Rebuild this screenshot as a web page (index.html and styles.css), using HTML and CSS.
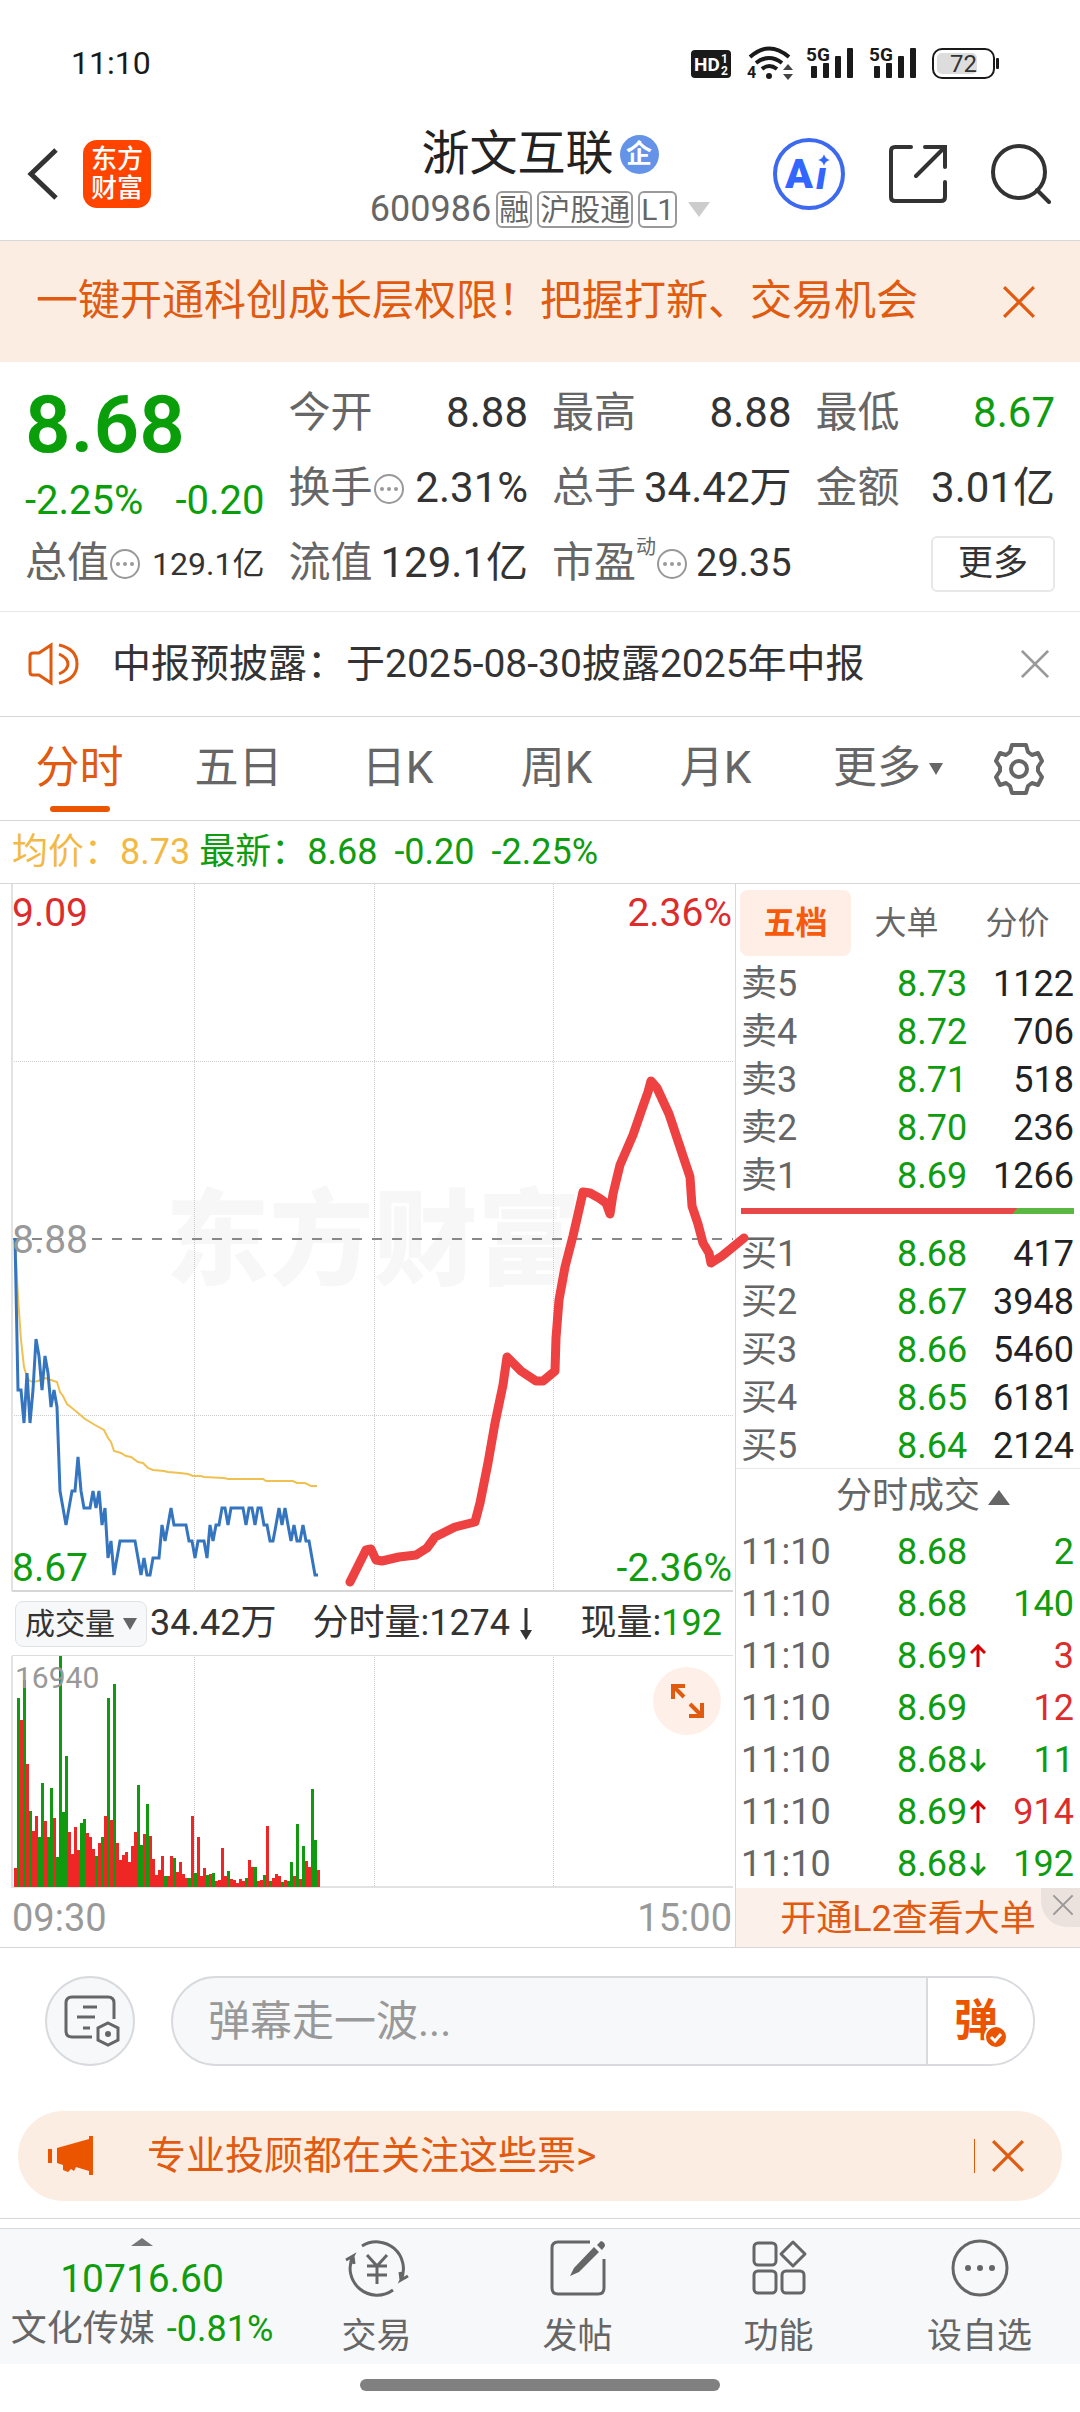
FILE: index.html
```
<!DOCTYPE html>
<html lang="zh-CN">
<head>
  <meta charset="UTF-8" />
  <meta name="viewport" content="width=device-width, initial-scale=1.0"/>
  <title>浙文互联 600986</title>
  <link rel="stylesheet" href="styles.css">
</head>
<body>
  <svg class="defs" aria-hidden="true">
    <symbol id="close" viewBox="0 0 32 32"><path d="M2 2 30 30M30 2 2 30" /></symbol>
    <symbol id="info" viewBox="0 0 32 32">
      <circle cx="16" cy="16" r="14" fill="none" stroke="#999" stroke-width="2" />
      <g fill="#999"><circle cx="9" cy="16" r="2" /><circle cx="16" cy="16" r="2" /><circle cx="23" cy="16" r="2" /></g>
    </symbol>
    <symbol id="up" viewBox="0 0 16 24"><path d="M8 23V2M1 9 8 2 15 9" fill="none" stroke="#d80000" stroke-width="3" /></symbol>
    <symbol id="down" viewBox="0 0 16 24"><path d="M8 1V22M1 15 8 22 15 15" fill="none" stroke="#0f9c0f" stroke-width="3" /></symbol>
  </svg>

  <div class="status">
    <span class="clock">11:10</span>
    <svg class="status-icons" viewBox="0 0 310 44" width="310" height="44">
      <rect x="1" y="9" width="40" height="28" rx="4" fill="#1a1a1a" />
      <text x="4" y="30" font-size="19" font-weight="700" fill="#fff">HD</text>
      <text x="31" y="22" font-size="12" font-weight="700" fill="#fff">1</text>
      <text x="31" y="34" font-size="12" font-weight="700" fill="#fff">2</text>
      <g fill="none" stroke="#1a1a1a" stroke-width="4">
        <path d="M60 16Q79 -1 99 16" />
        <path d="M66 22Q79 12 92 22" />
        <path d="M72 28Q79 22 87 28" />
      </g>
      <g fill="#1a1a1a">
        <circle cx="79" cy="35" r="3" />
        <text x="57" y="37" font-size="16" font-weight="700">4</text>
        <path d="M93 29 98 23 103 29ZM93 33 98 39 103 33Z" fill="#444" />
        <g id="signal">
          <text x="116" y="20" font-size="19" font-weight="700">5G</text>
          <rect x="121" y="25" width="6" height="12" rx="1" />
          <rect x="133" y="22" width="6" height="15" rx="1" />
          <rect x="145" y="15" width="6" height="22" rx="1" />
          <rect x="157" y="7" width="6" height="30" rx="1" />
        </g>
        <use href="#signal" x="63" />
        <rect x="306" y="17" width="3" height="11" rx="1" />
      </g>
      <rect x="243" y="8" width="61" height="29" rx="9" fill="#fff" stroke="#1a1a1a" stroke-width="2" />
      <rect x="247" y="12" width="40" height="21" rx="5" fill="#ddd" />
      <text x="260" y="31" font-size="24" fill="#333">72</text>
    </svg>
  </div>

  <header class="header">
    <div class="header-left">
      <a href="#" class="back" aria-label="返回">
        <svg viewBox="0 0 32 54" width="32" height="54"><path d="M29 3 4 27 29 51" fill="none" stroke="#333" stroke-width="5" /></svg>
      </a>
      <a href="#" class="logo">东方<br>财富</a>
    </div>
    <div class="stock">
      <h1>浙文互联<span class="badge">企</span></h1>
      <div class="stock-sub">
        <span class="code">600986</span>
        <span class="tag">融</span>
        <span class="tag">沪股通</span>
        <span class="tag">L1</span>
        <svg class="stock-caret" viewBox="0 0 22 15" width="22" height="15"><path d="M0 0H22L11 15Z" fill="#ccc" /></svg>
      </div>
    </div>
    <div class="header-right">
      <button aria-label="AI">
        <svg viewBox="0 0 72 72" width="72" height="72">
          <circle cx="36" cy="36" r="34" fill="#fff" stroke="#3d69ee" stroke-width="4" />
          <g fill="#3366ff">
            <text x="12" y="50" font-size="41" font-weight="900">A</text>
            <text x="43" y="51" font-size="38" font-weight="900" font-style="italic">ı</text>
            <path d="M51 16Q52 21 57 22Q52 23 51 28Q50 23 45 22Q50 21 51 16Z" />
          </g>
        </svg>
      </button>
      <button aria-label="分享">
        <svg viewBox="0 0 58 58" width="58" height="58">
          <path d="M22 2H6Q2 2 2 6V52Q2 56 6 56H52Q56 56 56 52V37M36 2H56V22M56 2 27 31" fill="none" stroke="#333" stroke-width="4" stroke-linecap="round" />
        </svg>
      </button>
      <button aria-label="搜索">
        <svg viewBox="0 0 60 60" width="60" height="60">
          <path d="M46 46 58 58" stroke="#333" stroke-width="4" stroke-linecap="round" />
          <circle cx="28" cy="28" r="26" fill="none" stroke="#333" stroke-width="4" />
        </svg>
      </button>
    </div>
  </header>

  <div class="banner">
    <a href="#">一键开通科创成长层权限！把握打新、交易机会</a>
    <button aria-label="关闭"><svg class="x x-orange" width="34" height="34"><use href="#close" /></svg></button>
  </div>

  <section class="quote">
    <div class="price-block">
      <div class="price">8.68</div>
      <div class="change"><span>-2.25%</span><span>-0.20</span></div>
    </div>
    <div class="cell"><span class="label">今开</span><span>8.88</span></div>
    <div class="cell"><span class="label">最高</span><span>8.88</span></div>
    <div class="cell"><span class="label">最低</span><span class="green">8.67</span></div>
    <div class="cell"><span class="label">换手<svg class="info"><use href="#info" /></svg></span><span>2.31%</span></div>
    <div class="cell"><span class="label">总手</span><span>34.42万</span></div>
    <div class="cell"><span class="label">金额</span><span>3.01亿</span></div>
    <div class="cell"><span class="label">总值<svg class="info"><use href="#info" /></svg></span><span class="small">129.1亿</span></div>
    <div class="cell"><span class="label">流值</span><span>129.1亿</span></div>
    <div class="cell"><span class="label">市盈<sup>动</sup><svg class="info"><use href="#info" /></svg></span><span class="medium">29.35</span></div>
    <div class="cell cell-more"><button class="more">更多</button></div>
  </section>

  <div class="notice">
    <svg viewBox="0 0 52 44" width="52" height="44" fill="none" stroke="#e05a10" stroke-width="3">
      <path d="M23 3 11 11H5Q2 11 2 14V30Q2 33 5 33H11L23 41ZM31 12Q40 16 40 22Q40 28 31 32M31 3Q49 7 49 22Q49 37 31 41" />
    </svg>
    <a href="#">中报预披露：于2025-08-30披露2025年中报</a>
    <button aria-label="关闭"><svg class="x x-gray" width="30" height="30"><use href="#close" /></svg></button>
  </div>

  <nav class="periods">
    <button class="active">分时</button>
    <button>五日</button>
    <button>日K</button>
    <button>周K</button>
    <button>月K</button>
    <button class="periods-more">更多<svg viewBox="0 0 14 12" width="14" height="12"><path d="M0 0H14L7 12Z" fill="#666" /></svg></button>
    <button class="settings" aria-label="设置">
      <svg viewBox="0 0 50 52" width="50" height="52" fill="none" stroke="#666" stroke-width="4" stroke-linejoin="round">
        <path d="M18 2H32L34 9 38 12 44 10 48 18 44 24V28L48 34 44 42 38 40 34 43 32 50H18L16 43 12 40 6 42 2 34 6 28V24L2 18 6 10 12 12 16 9Z" />
        <circle cx="25" cy="26" r="8" />
      </svg>
    </button>
  </nav>

  <div class="legend">
    <span class="avg">均价：8.73</span>
    <span class="green">最新：8.68</span>
    <span class="green">-0.20</span>
    <span class="green">-2.25%</span>
  </div>

  <main class="main">
    <div class="charts">
      <div class="plot">
        <span class="watermark">东方财富</span>
        <svg id="priceChart" class="price-chart" viewBox="0 1 735 708" preserveAspectRatio="none">
          <g stroke="#ccc" stroke-dasharray="1 1">
            <path d="M12 178.5H733M12 532.5H733M194.5 1V708M374.5 1V708M553.5 1V708" />
          </g>
          <path d="M12 356H733" stroke="#888" stroke-width="2" stroke-dasharray="10 10" />
          <path d="M12 1V708" stroke="#e2e2e2" stroke-width="2" />
          <path d="M12 708H733" stroke="#d6d6d6" stroke-width="2" />
        </svg>
        <span class="axis top-left red">9.09</span>
        <span class="axis top-right red">2.36%</span>
        <span class="axis mid-left">8.88</span>
        <span class="axis bottom-left green">8.67</span>
        <span class="axis bottom-right green">-2.36%</span>
      </div>

      <div class="volume-info">
        <label class="indicator">
          <select aria-label="指标"><option>成交量</option><option>MACD</option></select>
        </label>
        <span>34.42万</span>
        <span class="minute">分时量:1274<svg viewBox="0 0 12 32" width="12" height="32"><path d="M6 0V28" stroke="#333" stroke-width="3" /><path d="M0 22H12L6 32Z" fill="#333" /></svg></span>
        <span class="current">现量:<b class="green">192</b></span>
      </div>

      <div class="volume">
        <svg id="volumeChart" class="volume-chart" viewBox="0 0 735 234" preserveAspectRatio="none">
          <path d="M194.5 0V232M374.5 0V232M553.5 0V232" stroke="#ccc" stroke-dasharray="1 1" />
          <path d="M12 1V233M12 232H733" stroke="#e2e2e2" stroke-width="2" />
          <path d="M12 .5H733" stroke="#ddd" />
        </svg>
        <span class="volume-max">16940</span>
        <button class="expand" aria-label="全屏">
          <svg viewBox="0 0 36 36" width="36" height="36" fill="none" stroke="#e05a10" stroke-width="4">
            <path d="M16 3H4V16M4 3 15 14M33 20V33H20M33 33 21 21" />
          </svg>
        </button>
      </div>
      <div class="times"><span>09:30</span><span>15:00</span></div>
    </div>

    <aside class="side">
      <div class="side-tabs">
        <button class="active">五档</button>
        <button>大单</button>
        <button>分价</button>
      </div>
      <table class="depth">
        <tr><th>卖5</th><td>8.73</td><td>1122</td></tr>
        <tr><th>卖4</th><td>8.72</td><td>706</td></tr>
        <tr><th>卖3</th><td>8.71</td><td>518</td></tr>
        <tr><th>卖2</th><td>8.70</td><td>236</td></tr>
        <tr><th>卖1</th><td>8.69</td><td>1266</td></tr>
      </table>
      <div class="ratio"><span class="ratio-buy"></span></div>
      <table class="depth">
        <tr><th>买1</th><td>8.68</td><td>417</td></tr>
        <tr><th>买2</th><td>8.67</td><td>3948</td></tr>
        <tr><th>买3</th><td>8.66</td><td>5460</td></tr>
        <tr><th>买4</th><td>8.65</td><td>6181</td></tr>
        <tr><th>买5</th><td>8.64</td><td>2124</td></tr>
      </table>
      <button class="trades-title">分时成交<svg viewBox="0 0 22 16" width="22" height="16"><path d="M0 16H22L11 1Z" fill="#666" /></svg></button>
      <table class="depth trades">
        <tr><th>11:10</th><td>8.68</td><td class="green">2</td></tr>
        <tr><th>11:10</th><td>8.68</td><td class="green">140</td></tr>
        <tr><th>11:10</th><td>8.69<svg class="arrow"><use href="#up" /></svg></td><td class="red">3</td></tr>
        <tr><th>11:10</th><td>8.69</td><td class="red">12</td></tr>
        <tr><th>11:10</th><td>8.68<svg class="arrow"><use href="#down" /></svg></td><td class="green">11</td></tr>
        <tr><th>11:10</th><td>8.69<svg class="arrow"><use href="#up" /></svg></td><td class="red">914</td></tr>
        <tr><th>11:10</th><td>8.68<svg class="arrow"><use href="#down" /></svg></td><td class="green">192</td></tr>
      </table>
      <div class="level2">
        <a href="#">开通L2查看大单</a>
        <button aria-label="关闭"><svg class="x x-gray" width="22" height="22"><use href="#close" /></svg></button>
      </div>
    </aside>
  </main>

  <form class="comment">
    <button type="button" class="comment-list" aria-label="弹幕设置">
      <svg viewBox="0 0 56 52" width="56" height="52" fill="none" stroke="#666" stroke-width="3">
        <path d="M50 24V8Q50 2 44 2H8Q2 2 2 8V36Q2 42 8 42H28M19 12H33M13 22H31M19 33H26" />
        <path d="M44 28 54 33V45L44 50 34 45V33Z" />
        <circle cx="44" cy="39" r="3" fill="#666" stroke="none" />
      </svg>
    </button>
    <div class="comment-box">
      <input type="text" placeholder="弹幕走一波..." aria-label="弹幕">
      <button type="button" class="danmu">弹<svg viewBox="0 0 24 24" width="24" height="24"><circle cx="12" cy="12" r="11" fill="#eb5500" stroke="#fff" stroke-width="2" /><path d="M7 12 11 16 17 9" fill="none" stroke="#fff" stroke-width="3" /></svg></button>
    </div>
  </form>

  <div class="promo">
    <svg viewBox="0 0 46 40" width="46" height="40" fill="#eb5500">
      <path d="M0 13H4V27H0ZM9 12 41 3V0H45V39H41V35L28 31 26 35 23 33 20 36 15 34V29L9 27Z" />
    </svg>
    <a href="#">专业投顾都在关注这些票&gt;</a>
    <button aria-label="关闭"><svg class="x x-orange" width="34" height="34"><use href="#close" /></svg></button>
  </div>

  <footer class="footer">
    <a href="#" class="index">
      <svg viewBox="0 0 22 8" width="22" height="8"><path d="M0 8H22L11 0Z" fill="#777" /></svg>
      <span class="index-value">10716.60</span>
      <span class="index-name">文化传媒<span class="green">-0.81%</span></span>
    </a>
    <a href="#" class="item">
      <svg viewBox="0 0 66 60" width="66" height="60" fill="none" stroke="#666" stroke-width="3">
        <path d="M18 8A27 27 0 0 1 57 42L64 38M57 42 56 34M49 52A27 27 0 0 1 9 18L2 22M9 18 10 26M23 17 33 28 43 17M33 28V46M23 28H43M23 37H43" />
      </svg>
      交易
    </a>
    <a href="#" class="item">
      <svg viewBox="0 0 60 60" width="60" height="60" fill="none" stroke="#666" stroke-width="3">
        <path d="M42 4H10Q4 4 4 10V50Q4 56 10 56H50Q56 56 56 50V21" />
        <path d="M22 38 26 30 46 9 51 14 31 34ZM49 7 53 3Q57 4 57 8L54 12Z" fill="#666" stroke="none" />
      </svg>
      发帖
    </a>
    <a href="#" class="item">
      <svg viewBox="0 0 60 60" width="60" height="60" fill="none" stroke="#666" stroke-width="3">
        <rect x="5" y="5" width="22" height="22" rx="4" />
        <rect x="5" y="33" width="22" height="22" rx="4" />
        <rect x="33" y="33" width="22" height="22" rx="4" />
        <path d="M44 4 56 16 44 28 32 16Z" stroke-linejoin="round" />
      </svg>
      功能
    </a>
    <a href="#" class="item">
      <svg viewBox="0 0 60 60" width="60" height="60">
        <circle cx="30" cy="30" r="27" fill="none" stroke="#666" stroke-width="3" />
        <g fill="#666"><circle cx="18" cy="30" r="3" /><circle cx="30" cy="30" r="3" /><circle cx="42" cy="30" r="3" /></g>
      </svg>
      设自选
    </a>
  </footer>
  <div class="home"><span></span></div>

  <script src="script.js"></script>
</body>
</html>
```

FILE: styles.css
```
* {
  box-sizing: border-box;
}

body {
  margin: 0;
  background: #fff;
  color: #333;
  font-family: Roboto, "Noto Sans CJK SC", sans-serif;
  font-size: 36px;
  line-height: 1.25;
}

button, input, select {
  font: inherit;
  color: inherit;
  border: none;
  background: none;
  padding: 0;
  margin: 0;
}

button {
  cursor: pointer;
}

a {
  color: inherit;
  text-decoration: none;
}

svg {
  display: block;
  flex: none;
}

.defs {
  display: none;
}

.x {
  fill: none;
  stroke-width: 3;
}

.x-orange {
  stroke: #e05a10;
}

.x-gray {
  stroke: #999;
}

/* status bar */
.status {
  display: flex;
  justify-content: space-between;
  align-items: center;
  height: 125px;
  padding: 0 80px 0 71px;
}

.clock {
  font-size: 32px;
  color: #1a1a1a;
}

/* header */
.header {
  display: grid;
  grid-template-columns: 1fr auto 1fr;
  height: 116px;
  border-bottom: 1px solid #d8d8d8;
}

.header-left, .header-right {
  display: flex;
  align-items: center;
  height: 98px;
}

.header-left {
  gap: 24px;
  padding-left: 27px;
}

.header-right {
  justify-content: flex-end;
  gap: 44px;
  padding-right: 29px;
}

.logo {
  width: 68px;
  height: 68px;
  padding-top: 5px;
  border-radius: 14px;
  background: #ff4400;
  color: #fff;
  font-size: 26px;
  line-height: 29px;
  font-weight: 500;
  text-align: center;
}

.stock h1 {
  display: flex;
  justify-content: center;
  align-items: center;
  gap: 6px;
  margin: 0;
  font-size: 48px;
  line-height: 58px;
  font-weight: 400;
  color: #222;
}

.badge {
  width: 39px;
  height: 39px;
  border-radius: 50%;
  background: #6493e8;
  color: #fff;
  font-size: 26px;
  line-height: 38px;
  font-weight: 700;
  text-align: center;
}

.stock-sub {
  display: flex;
  align-items: center;
  gap: 5px;
  height: 52px;
  color: #666;
}

.tag {
  border: 2px solid #999;
  border-radius: 6px;
  padding: 0 1px;
  font-size: 30px;
  line-height: 33px;
}

.stock-caret {
  margin-left: 6px;
}

/* banner */
.banner {
  display: flex;
  justify-content: space-between;
  align-items: center;
  height: 121px;
  padding: 0 44px 0 36px;
  background: #fcede3;
  color: #e05a10;
  font-size: 42px;
}

/* quote */
.quote {
  display: grid;
  grid-template-columns: repeat(4, 1fr);
  grid-auto-rows: 75px;
  column-gap: 24px;
  padding: 14px 25px 10px;
  border-bottom: 1px solid #e8e8e8;
  font-size: 42px;
}

.price-block {
  grid-row: span 2;
  color: #0a9f0a;
}

.price {
  font-size: 80px;
  line-height: 98px;
  font-weight: 600;
}

.change {
  display: flex;
  justify-content: space-between;
  font-size: 40px;
  line-height: 54px;
}

.cell {
  display: flex;
  justify-content: space-between;
  align-items: center;
  white-space: nowrap;
}

.label {
  display: flex;
  align-items: center;
  color: #666;
}

.label sup {
  align-self: flex-start;
  font-size: 20px;
  line-height: 20px;
}

.info {
  width: 32px;
  height: 32px;
}

.small {
  font-size: 32px;
}

.medium {
  font-size: 38px;
}

.cell-more {
  justify-content: flex-end;
}

.more {
  width: 124px;
  height: 56px;
  border: 2px solid #e8e8e8;
  border-radius: 6px;
  font-size: 35px;
  line-height: 50px;
}

/* notice */
.notice {
  display: flex;
  align-items: center;
  height: 105px;
  padding: 0 30px 0 28px;
  border-bottom: 1px solid #d8d8d8;
  font-size: 39px;
}

.notice a {
  flex: 1;
  padding-left: 32px;
}

/* periods */
.periods {
  display: grid;
  grid-template-columns: repeat(5, 159fr) 186fr 99fr;
  height: 104px;
  border-bottom: 1px solid #d8d8d8;
  color: #666;
  font-size: 44px;
}

.periods button {
  display: flex;
  justify-content: center;
  align-items: center;
}

.periods .active {
  position: relative;
  color: #e05a10;
}

.periods .active::after {
  content: "";
  position: absolute;
  bottom: 8px;
  width: 60px;
  height: 6px;
  border-radius: 3px;
  background: #eb5500;
}

.periods-more {
  gap: 8px;
}

.periods .settings {
  padding-right: 24px;
}

/* legend */
.legend {
  display: flex;
  align-items: center;
  gap: 17px;
  height: 63px;
  padding-left: 12px;
  border-bottom: 1px solid #d8d8d8;
}

.legend .avg {
  margin-right: -8px;
  color: #f2b946;
}

/* charts */
.main {
  display: grid;
  grid-template-columns: 1fr 345px;
  border-bottom: 1px solid #d8d8d8;
}

.plot {
  position: relative;
}

.price-chart {
  position: relative;
  width: 100%;
  height: 708px;
  overflow: visible;
  fill: none;
}

.watermark {
  position: absolute;
  top: 50%;
  left: 12px;
  right: 0;
  margin-top: -56px;
  color: #f7f7f7;
  font-size: 104px;
  line-height: 120px;
  font-weight: 900;
  text-align: center;
}

.axis {
  position: absolute;
  font-size: 39px;
  line-height: 44px;
  color: #999;
}

.top-left {
  top: 7px;
  left: 12px;
}

.top-right {
  top: 7px;
  right: 3px;
}

.mid-left {
  top: 50%;
  left: 12px;
  margin-top: -20px;
}

.bottom-left {
  bottom: 2px;
  left: 12px;
}

.bottom-right {
  bottom: 2px;
  right: 3px;
}

.volume-info {
  display: flex;
  align-items: center;
  height: 63px;
  padding: 0 13px 0 15px;
  white-space: nowrap;
}

.indicator {
  position: relative;
  margin-right: 3px;
}

.indicator select {
  appearance: none;
  display: block;
  width: 132px;
  height: 46px;
  padding-left: 9px;
  border: 1px solid #e0e2e6;
  border-radius: 8px;
  background: #f7f8fa;
  font-size: 30px;
}

.indicator::after {
  content: "";
  position: absolute;
  top: 17px;
  right: 10px;
  border: 7px solid transparent;
  border-top: 12px solid #666;
  border-bottom: none;
}

.minute {
  display: flex;
  align-items: center;
  gap: 10px;
  margin-left: 36px;
}

.current {
  margin-left: auto;
}

.current b {
  font-weight: 400;
}

.volume {
  position: relative;
}

.volume-chart {
  width: 100%;
  height: 234px;
  fill: none;
}

.volume-max {
  position: absolute;
  top: 4px;
  left: 15px;
  color: #999;
  font-size: 30px;
}

.expand {
  position: absolute;
  top: 12px;
  right: 14px;
  display: flex;
  justify-content: center;
  align-items: center;
  width: 68px;
  height: 68px;
  border-radius: 50%;
  background: #fef0e8;
}

.times {
  display: flex;
  justify-content: space-between;
  align-items: center;
  height: 58px;
  padding: 2px 3px 0 12px;
  color: #999;
  font-size: 38px;
}

/* order book */
.side {
  border-left: 1px solid #d8d8d8;
}

.side-tabs {
  display: grid;
  grid-template-columns: repeat(3, 1fr);
  height: 74px;
  padding: 6px 7px 2px 4px;
  color: #666;
  font-size: 32px;
}

.side-tabs .active {
  border-radius: 8px;
  background: #feeee6;
  color: #f75a0a;
  font-weight: 700;
}

.depth {
  width: 100%;
  border-collapse: collapse;
  table-layout: fixed;
}

.depth tr {
  height: 48px;
}

.depth th {
  width: 161px;
  padding: 3px 0 0 5px;
  line-height: 42px;
  font-weight: 400;
  text-align: left;
  color: #666;
}

.depth td {
  padding: 3px 0 0;
  line-height: 42px;
  color: #0f9c0f;
}

.depth td:last-child {
  padding-right: 6px;
  text-align: right;
  color: #222;
}

.trades tr {
  height: 52px;
}

.trades td:last-child.green {
  color: #0f9c0f;
}

.trades td:last-child.red {
  color: #dc2c2c;
}

.arrow {
  display: inline-block;
  width: 16px;
  height: 24px;
  margin-left: 3px;
}

.ratio {
  height: 6px;
  margin: 10px 6px 14px 5px;
  background: #5ab742;
}

.ratio-buy {
  display: block;
  width: 83%;
  height: 6px;
  background: #e84848;
  clip-path: polygon(0 0, 100% 0, calc(100% - 5px) 100%, 0 100%);
}

.trades-title {
  display: flex;
  justify-content: center;
  align-items: center;
  gap: 8px;
  width: 100%;
  height: 56px;
  padding-left: 30px;
  border-top: 1px solid #e8e8e8;
  color: #666;
}

.level2 {
  position: relative;
  height: 59px;
  background: #fcf0ea;
  color: #e05a10;
  line-height: 63px;
  text-align: center;
}

.level2 button {
  position: absolute;
  top: 0;
  right: 0;
  width: 39px;
  height: 39px;
  padding: 0 6px 6px 11px;
  border-bottom-left-radius: 26px;
  background: #ece2dd;
}

/* comment */
.comment {
  display: flex;
  gap: 36px;
  padding: 28px 45px 45px;
}

.comment-list {
  display: flex;
  justify-content: center;
  align-items: center;
  width: 90px;
  height: 90px;
  padding-left: 4px;
  border: 2px solid #d8dade;
  border-radius: 50%;
  background: #f7f8fa;
}

.comment-box {
  display: flex;
  flex: 1;
  height: 90px;
  border: 2px solid #d8dade;
  border-radius: 45px;
  overflow: hidden;
  background: #f7f8fa;
}

.comment-box input {
  flex: 1;
  min-width: 0;
  padding: 3px 0 0 35px;
  font-size: 42px;
}

.comment-box input::placeholder {
  color: #999;
}

.danmu {
  display: flex;
  align-items: center;
  width: 107px;
  padding-left: 26px;
  border-left: 2px solid #d8dade;
  background: #fff;
  color: #eb5500;
  font-size: 44px;
  font-weight: 700;
}

.danmu svg {
  margin: 32px 0 0 -14px;
}

/* promo */
.promo {
  display: flex;
  align-items: center;
  height: 90px;
  margin: 0 18px 17px;
  padding: 0 37px 0 30px;
  border-radius: 45px;
  background: #fcede3;
  color: #e05a10;
  font-size: 39px;
}

.promo a {
  flex: 1;
  padding-left: 53px;
}

.promo button {
  padding-left: 16px;
  border-left: 1px solid #e05a10;
}

/* footer */
.footer {
  display: grid;
  grid-template-columns: 276fr repeat(4, 201fr);
  height: 146px;
  border-top: 1px solid #d8d8d8;
  color: #666;
  background: linear-gradient(#fff 9px, #d8d8d8 9px, #d8d8d8 10px, #f7f8fa 10px);
}

.index {
  display: flex;
  flex-direction: column;
  align-items: center;
  padding: 19px 0 0 8px;
  white-space: nowrap;
}

.index-value {
  margin-top: 8px;
  color: #0f9c0f;
  font-size: 39px;
  line-height: 50px;
}

.index-name {
  display: flex;
  gap: 12px;
  line-height: 50px;
}

.item {
  display: flex;
  flex-direction: column;
  align-items: center;
  gap: 15px;
  padding-top: 19px;
  font-size: 35px;
  line-height: 48px;
}

.home {
  display: flex;
  justify-content: center;
  padding-top: 15px;
}

.home span {
  width: calc(100% / 3);
  height: 12px;
  border-radius: 6px;
  background: #808080;
}

/* rise and fall */
.green {
  color: #0f9c0f;
}

.red {
  color: #dc2c2c;
}
```

FILE: script.js
```
document.addEventListener('DOMContentLoaded', () => {
  const priceChart = document.getElementById('priceChart');
  const volumeChart = document.getElementById('volumeChart');

  // Cents below the previous close (8.88), one value per minute
  const drops = [
    0, 9, 9, 11, 8, 11, 9, 6, 7, 9, 7, 8, 10, 9, 10, 15, 16, 17, 16, 15,
    15, 13, 15, 16, 16, 16, 15, 16, 15, 17, 16, 19, 18, 20, 19, 18, 18, 18, 18, 18,
    18, 19, 20, 19, 20, 20, 19, 19, 19, 17, 18, 17, 16, 17, 17, 17, 17, 17, 18, 18,
    19, 18, 18, 18, 19, 17, 18, 17, 17, 16, 16, 17, 16, 16, 16, 16, 16, 17, 16, 16,
    17, 16, 16, 17, 17, 18, 18, 17, 16, 17, 16, 17, 18, 17, 18, 18, 17, 18, 18, 19,
    20, 20
  ];

  const average = '15,355 18,414 21,457 24,484 27,494 30,498 33,499 38,498 45,495 51,497 57,499 60,509 63,513 67,521 72,525 78,530 85,536 95,542 104,547 108,555 111,559 114,568 121,570 126,573 131,574 138,579 143,580 148,585 153,587 164,588 168,589 180,590 188,591 193,593 201,593 204,594 224,595 228,596 263,596 266,598 293,598 297,600 305,600 311,603 317,603';

  const forecast = '350,699 360,679 366,667 371,666 376,677 382,678 399,674 416,672 427,665 435,654 455,644 475,639 480,620 488,580 495,540 503,502 507,474 521,488 536,498 543,498 555,488 556,455 559,417 565,384 573,353 579,327 583,309 590,310 599,315 606,320 610,331 613,311 620,282 633,252 643,223 648,209 651,198 657,205 669,231 680,264 690,294 692,323 698,341 703,360 709,370 711,380 722,373 744,355';

  // Bar heights, negative when the price fell in that minute
  const volumes = [
    19, -189, 167, -207, 123, -76, 56, 71, -50, -104, 66, -50, -99, 69, -30, -231, -75, -131, 55, 33,
    60, 37, -64, -68, 54, 50, 38, -31, 44, -50, 71, -189, 67, -203, 44, 27, 32, 35, 25, 41,
    55, -102, -42, 53, -83, 51, 28, 12, 17, 31, -11, 11, 31, -29, 15, 25, 13, 9, -9, 71,
    -14, 50, 11, 19, -12, 13, -14, 6, 7, 39, 11, -16, 8, 7, 4, 8, 6, -9, 27, 20,
    -20, 6, 7, -12, 61, -6, 9, 13, 11, -5, 7, -6, -25, 11, -63, 8, -41, 26, 20, -98,
    -47, 17
  ];

  const minuteX = i => 15 + i * 3;

  function add(parent, tag, attrs) {
    const el = document.createElementNS('http://www.w3.org/2000/svg', tag);
    Object.keys(attrs).forEach(key => el.setAttribute(key, attrs[key]));
    parent.appendChild(el);
  }

  const price = drops.map((d, i) => `${minuteX(i)},${Math.round(355 + d * 16.86)}`).join(' ');

  add(priceChart, 'polyline', { points: average, stroke: '#f0c050', 'stroke-width': 2 });
  add(priceChart, 'polyline', { points: price, stroke: '#3575c0', 'stroke-width': 3 });
  add(priceChart, 'polyline', {
    points: forecast,
    stroke: '#ee4242',
    'stroke-width': 9,
    'stroke-linecap': 'round',
    'stroke-linejoin': 'round'
  });

  volumes.forEach((v, i) => {
    const height = Math.abs(v);
    add(volumeChart, 'rect', {
      x: minuteX(i) - 1,
      y: 232 - height,
      width: 3,
      height: height,
      fill: v < 0 ? '#109a10' : '#ee2626'
    });
  });
});
```
